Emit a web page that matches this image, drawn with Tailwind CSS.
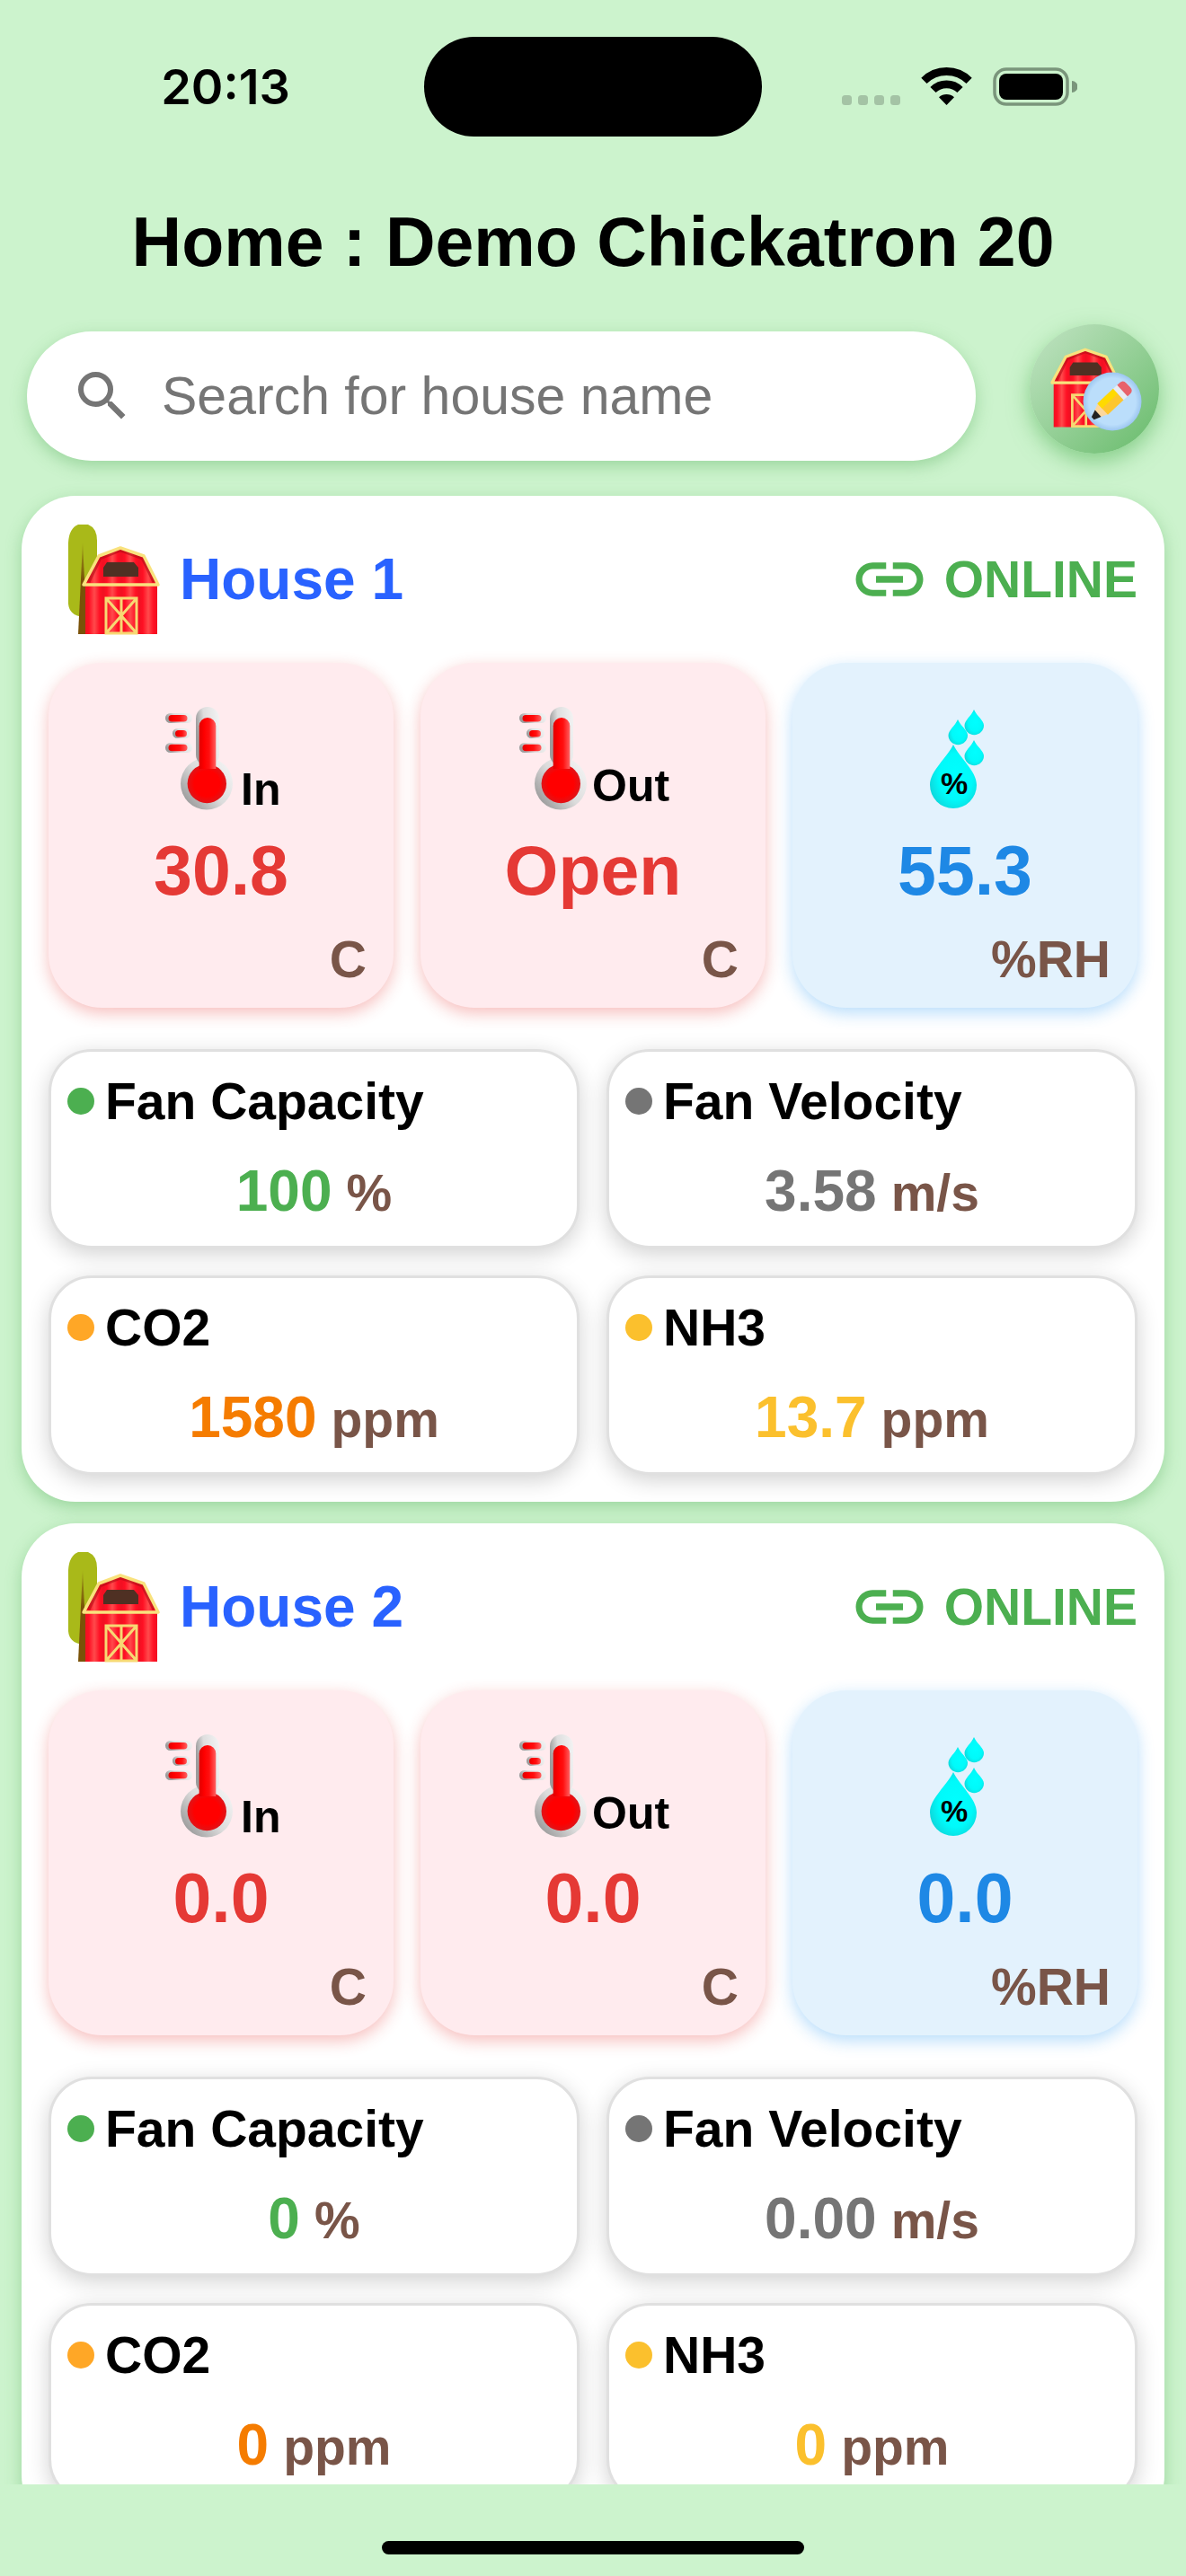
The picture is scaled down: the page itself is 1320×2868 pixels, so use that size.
<!DOCTYPE html>
<html lang="en">
<head>
<meta charset="utf-8">
<meta name="viewport" content="width=device-width, initial-scale=1">
<title>Home : Demo Chickatron 20</title>
<script src="https://cdn.jsdelivr.net/npm/@tailwindcss/browser@4"></script>
</head>
<body class="flex h-screen flex-col overflow-hidden bg-[#ccf3cd] font-['Liberation_Sans',Arial,sans-serif] text-black">

<!-- shared drawings -->
<svg class="absolute size-0" aria-hidden="true">
  <defs>
    <linearGradient id="planks" x1="23" x2="43" y1="0" y2="0" gradientUnits="userSpaceOnUse" spreadMethod="repeat">
      <stop offset="0" stop-color="#f01022"/><stop offset=".2" stop-color="#ff1024"/><stop offset=".5" stop-color="#ff4a4c"/><stop offset=".8" stop-color="#ff1024"/><stop offset="1" stop-color="#f01022"/>
    </linearGradient>
    <linearGradient id="trunk" x1="0" x2="0" y1="0" y2="1"><stop offset="0" stop-color="#7d5a10" stop-opacity=".3"/><stop offset=".4" stop-color="#7a5208"/><stop offset="1" stop-color="#7a5208"/></linearGradient>
    <linearGradient id="glass" x1="0" x2="1" y1=".3" y2="0"><stop offset="0" stop-color="#9c9c9c"/><stop offset=".35" stop-color="#dedede"/><stop offset="1" stop-color="#f4f4f4"/></linearGradient>
    <linearGradient id="bulb" x1="0" x2="1" y1=".9" y2=".1"><stop offset="0" stop-color="#8e8e8e"/><stop offset=".5" stop-color="#dcdcdc"/><stop offset="1" stop-color="#f6f6f6"/></linearGradient>
    <linearGradient id="mercury" x1="0" x2="1" y1="0" y2="0"><stop offset="0" stop-color="#e00000"/><stop offset=".3" stop-color="#ff0000"/><stop offset=".6" stop-color="#ff1010"/><stop offset="1" stop-color="#ff6060"/></linearGradient>
    <radialGradient id="ball" cx=".5" cy=".5" r=".5"><stop offset="0" stop-color="#ff0000"/><stop offset=".65" stop-color="#ff0000"/><stop offset="1" stop-color="#e01418"/></radialGradient>
    <radialGradient id="water" cx=".55" cy=".5" r=".6"><stop offset="0" stop-color="#00ffff"/><stop offset=".6" stop-color="#00fafa"/><stop offset="1" stop-color="#10d4d8"/></radialGradient>
    <radialGradient id="badge"><stop offset=".8" stop-color="#bbdefb"/><stop offset="1" stop-color="#9cc6f0"/></radialGradient>

    <g id="barn">
      <path d="M23 69V124H103V69L88 37 62 28 38 37Z" fill="url(#planks)"/>
      <path d="M26 66 39 39 62 30 87 39 100 66" fill="none" stroke="#b00d16" stroke-width="5" opacity=".6"/>
      <path d="M47 44H77L82 50V60H43V50Z" fill="#4f3023"/>
      <path d="M21 69 38 37 62 28 88 37 104 69Z" fill="none" stroke="#f9e27d" stroke-width="3.500" stroke-linejoin="round"/>
      <path d="M46 84H80V123H46ZM63 84V123M46 84 80 123M80 84 46 123" fill="none" stroke="#f7d873" stroke-width="3"/>
    </g>
    <g id="thermometer">
      <rect x="4" y="10" width="30" height="11" rx="5.500" fill="url(#glass)"/>
      <rect x="12" y="27" width="20" height="11" rx="5.500" fill="url(#glass)"/>
      <rect x="4" y="43" width="30" height="11" rx="5.500" fill="url(#glass)"/>
      <rect x="7.500" y="12" width="21" height="7.500" rx="3.750" fill="url(#mercury)"/>
      <rect x="15" y="29" width="13" height="7.500" rx="3.750" fill="url(#mercury)"/>
      <rect x="7.500" y="44.700" width="21" height="7.500" rx="3.750" fill="url(#mercury)"/>
      <circle cx="50" cy="88.500" r="29" fill="url(#bulb)"/>
      <rect x="38" y="3" width="26" height="66" rx="13" fill="url(#glass)"/>
      <circle cx="50.300" cy="88.500" r="21.700" fill="url(#ball)"/>
      <path d="M41.700 72V24.300A9.300 9.300 0 0 1 60.300 24.300V72Z" fill="url(#mercury)"/>
    </g>
    <path id="drop" d="M58 6C61 13 69 18 69 23.500A10.600 10.600 0 0 1 47.500 23.500C47.500 18 55 13 58 6Z" fill="url(#water)"/>
  </defs>
</svg>

<header class="shrink-0">
  <div class="grid grid-cols-[1fr_376px_1fr] items-center pt-[41px]">
    <time class="pl-[30px] text-center font-['Inter',sans-serif] text-[54px] leading-[60px] font-semibold">20:13</time>
    <div class="h-[111px] rounded-full bg-black"></div>
    <div class="flex items-center justify-center pr-[33px]">
      <svg class="h-[44px] w-[262px]" viewBox="0 0 262 44" role="img" aria-label="Wi-Fi connected, battery full">
        <g fill="#a4c3a5"><rect y="31" width="11" height="11" rx="3.500"/><rect x="18" y="31" width="11" height="11" rx="3.500"/><rect x="36" y="31" width="11" height="11" rx="3.500"/><rect x="54" y="31" width="11" height="11" rx="3.500"/></g>
        <g transform="translate(88)">
          <path d="M3.400 14.900A35.500 35.500 0 0 1 53.600 14.900M13.500 25A21.250 21.250 0 0 1 43.500 25" fill="none" stroke="#000" stroke-width="8.800"/>
          <path d="M28.500 42 20 33.300A12.500 12.500 0 0 1 37 33.300Z"/>
        </g>
        <rect x="170" y="2" width="81" height="39" rx="13" fill="none" stroke="#7a957b" stroke-width="3.500"/>
        <rect x="175" y="7" width="71" height="29" rx="8"/>
        <path d="M256 15A6.500 6.500 0 0 1 256 28Z" fill="#7a957b"/>
      </svg>
    </div>
  </div>
  <h1 class="mt-[74px] text-center text-[77px] leading-[87px] font-bold">Home : Demo Chickatron 20</h1>
  <div class="mt-[48px] flex items-start gap-[60px] px-[30px]">
    <label class="mt-[8px] flex h-[144px] min-w-0 flex-1 items-center gap-[30px] rounded-full bg-white px-[48px] shadow-[0_6px_18px_rgb(67_160_71/0.35)]">
      <svg class="size-[72px] shrink-0 fill-[#757575]" viewBox="0 0 24 24" aria-hidden="true"><path d="M15.500 14h-.79l-.28-.27A6.471 6.471 0 0 0 16 9.500 6.500 6.500 0 1 0 9.500 16c1.610 0 3.090-.59 4.230-1.570l.27.28v.79l5 4.990L20.490 19l-4.990-5zm-6 0C7.010 14 5 11.990 5 9.500S7.010 5 9.500 5 14 7.010 14 9.500 11.990 14 9.500 14z"/></svg>
      <input type="search" aria-label="Search for house name" placeholder="Search for house name" class="min-w-0 flex-1 bg-transparent text-[59px] leading-[66px] outline-none placeholder:text-[#757575]">
    </label>
    <button type="button" aria-label="Edit houses" class="size-[144px] shrink-0 rounded-full bg-linear-135 from-[#c2e4c4] to-[#66bb6a] shadow-[0_9px_24px_rgb(76_175_80/0.55)]">
      <svg class="size-full" viewBox="0 0 144 144" aria-hidden="true">
        <use href="#barn" transform="translate(6 3) scale(.9)"/>
        <circle cx="92" cy="86" r="32.500" fill="url(#badge)"/>
        <g transform="translate(71 104) rotate(-43)">
          <path d="M0-2 15-8.500V8.500L0 2Z" fill="#fbd79e"/><path d="M-1-2 7-5V5L-1 2Z" fill="#222"/>
          <path d="M14-8.500H38V8.500H14Z" fill="#fdc62f"/><path d="M14-8.500H38V-1H14Z" fill="#ffda00"/>
          <path d="M38-8.500H44V8.500H38Z" fill="#e9ecf2"/>
          <path d="M44-8.500H48Q53-8.500 53-3V3Q53 8.500 48 8.500H44Z" fill="#e8636b"/>
        </g>
      </svg>
    </button>
  </div>
</header>

<main id="houses" class="flex min-h-0 flex-1 flex-col gap-[24px] overflow-hidden px-[24px] pt-[39px]"></main>

<footer class="flex h-[102px] shrink-0 items-end justify-center pb-[24px]">
  <div class="h-[15px] w-[470px] rounded-full bg-black"></div>
</footer>

<script>
const houses = [
  { name: 'House 1', inside: '30.8', outside: 'Open', humidity: '55.3', fan: '100', velocity: '3.58', co2: '1580', nh3: '13.7' },
  { name: 'House 2', inside: '0.0', outside: '0.0', humidity: '0.0', fan: '0', velocity: '0.00', co2: '0', nh3: '0' },
];

const labelled = (text, width, x, y) => `
  <svg class="h-[120px] overflow-visible" viewBox="0 0 ${width} 120" role="img" aria-label="Temperature ${text}">
    <use href="#thermometer"/><text x="${x}" y="${y}" class="text-[50px] font-bold">${text}</text>
  </svg>`;

const drops = `
  <svg class="h-[120px]" viewBox="0 0 96 120" role="img" aria-label="Humidity">
    <use href="#drop"/><use href="#drop" x="-18" y="11"/><use href="#drop" y="34"/>
    <path d="M35 45C42 60 61 74 61 90A26 26 0 0 1 9 90C9 74 28 60 35 45Z" fill="url(#water)"/>
    <text x="36" y="100" text-anchor="middle" class="text-[34px] font-bold">%</text>
  </svg>`;

const tile = (icon, value, unit, box, ink) => `
  <div class="flex aspect-square flex-col items-center gap-[22px] rounded-[60px] pt-[46px] ${box}">
    ${icon}
    <p class="text-[77px] leading-[87px] font-bold ${ink}">${value}</p>
    <p class="self-end pr-[30px] text-[57px] leading-[66px] font-bold text-[#795548]">${unit}</p>
  </div>`;

const reading = (title, value, unit, dot, ink) => `
  <div class="rounded-[48px] border-3 border-[#e0e0e0] bg-white px-[18px] pt-[22px] pb-[25px] shadow-[0_6px_24px_rgb(0_0_0/0.18)]">
    <h3 class="flex items-center gap-[12px] text-[57px] leading-[66px] font-bold"><span class="size-[30px] rounded-full ${dot}"></span>${title}</h3>
    <p class="mt-[31px] flex items-baseline justify-center gap-[16px] text-[64px] leading-[72px] font-bold ${ink}">${value}<span class="text-[57px] leading-[57px] text-[#795548]">${unit}</span></p>
  </div>`;

const red = 'bg-[#ffebee] shadow-[0_6px_18px_rgb(229_57_53/0.32)]';
const blue = 'bg-[#e3f2fd] shadow-[0_6px_18px_rgb(33_150_243/0.32)]';

document.getElementById('houses').innerHTML = houses.map(h => `
  <article class="shrink-0 rounded-[60px] bg-white p-[30px] shadow-[0_6px_18px_rgb(67_160_71/0.35)]">
    <header class="mb-[30px] flex h-[126px] items-center pl-[18px]">
      <svg class="mr-[20px] h-[126px] w-[108px]" viewBox="0 0 108 126" aria-hidden="true">
        <path d="M4 22Q5 6 15 2H26Q36 6 36 20V105H20Q5 103 4 90Z" fill="#a9b919"/>
        <path d="M20 22 25 124H15Z" fill="url(#trunk)"/><path d="M20 70 28 70V124H16Z" fill="#7a5208"/>
        <use href="#barn"/>
      </svg>
      <h2 class="text-[64px] leading-[72px] font-bold text-[#2962ff]">${h.name}</h2>
      <p class="ml-auto flex items-center gap-[16px] text-[57px] leading-[66px] font-bold text-[#4caf50]">
        <svg class="size-[90px] fill-current" viewBox="0 0 24 24" aria-hidden="true"><path d="M3.900 12c0-1.710 1.390-3.100 3.100-3.100h4V7H7c-2.760 0-5 2.240-5 5s2.240 5 5 5h4v-1.900H7c-1.710 0-3.100-1.390-3.100-3.100zM8 13h8v-2H8v2zm9-6h-4v1.900h4c1.710 0 3.100 1.390 3.100 3.100s-1.390 3.100-3.100 3.100h-4V17h4c2.760 0 5-2.240 5-5s-2.240-5-5-5z"/></svg>ONLINE
      </p>
    </header>
    <div class="grid grid-cols-3 gap-[30px]">
      ${tile(labelled('In', 132, 88, 112), h.inside, 'C', red, 'text-[#e53935]')}
      ${tile(labelled('Out', 172, 85, 108), h.outside, 'C', red, 'text-[#e53935]')}
      ${tile(drops, h.humidity, '%RH', blue, 'text-[#1e88e5]')}
    </div>
    <div class="mt-[46px] grid grid-cols-2 gap-[30px]">
      ${reading('Fan Capacity', h.fan, '%', 'bg-[#4caf50]', 'text-[#4caf50]')}
      ${reading('Fan Velocity', h.velocity, 'm/s', 'bg-[#757575]', 'text-[#757575]')}
      ${reading('CO2', h.co2, 'ppm', 'bg-[#ffa726]', 'text-[#f57c00]')}
      ${reading('NH3', h.nh3, 'ppm', 'bg-[#fbc02d]', 'text-[#fbc02d]')}
    </div>
  </article>`).join('');
</script>
</body>
</html>
